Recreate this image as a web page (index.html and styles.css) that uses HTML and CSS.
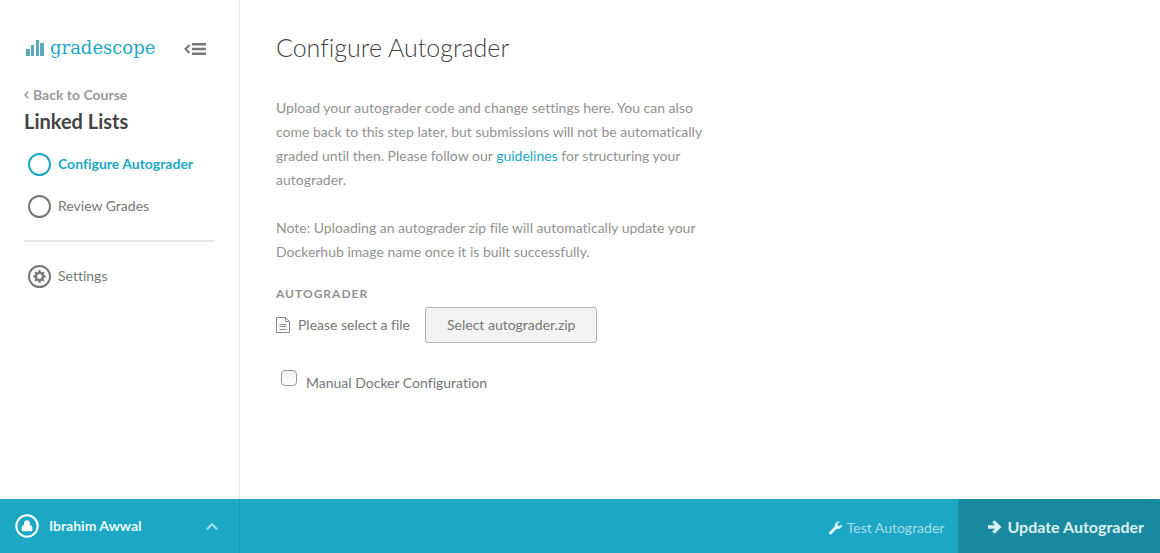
FILE: index.html
```html
<!DOCTYPE html>
<html lang="en">
<head>
<meta charset="utf-8">
<title>Configure Autograder | Gradescope</title>
<meta name="viewport" content="width=device-width, initial-scale=1">
<link rel="stylesheet" href="styles.css">
</head>
<body>
<div class="layout">
  <aside class="sidebar">
    <div class="sidebar-top">
      <a class="logo" href="#">
        <svg class="logo-mark" viewBox="0 0 18 16" width="18" height="16" aria-hidden="true"><path d="M0 9h4v7H0zM5 5h3v11H5zM10 0h3v16h-3zM14 3h4v13h-4z"/></svg>
        <span>gradescope</span>
      </a>
      <button class="collapse" type="button" aria-label="Collapse sidebar">
        <svg viewBox="0 0 22 12" width="22" height="12" aria-hidden="true"><path class="chev" d="M5.500 2 1.500 6l4 4"/><path class="bars" d="M8 0h14v2.500H8zM8 4.750h14v2.500H8zM8 9.500h14V12H8z"/></svg>
      </button>
    </div>
    <a class="back" href="#"><svg viewBox="0 0 5 8" width="5" height="8" aria-hidden="true"><path d="M4.300.7 1 4l3.300 3.300"/></svg>Back to Course</a>
    <h2 class="assignment">Linked Lists</h2>
    <nav class="steps">
      <a class="step active" href="#"><span class="ring"></span>Configure Autograder</a>
      <a class="step" href="#"><span class="ring"></span>Review Grades</a>
    </nav>
    <hr class="rule">
    <a class="step" href="#"><span class="ring"><svg viewBox="0 0 12 12" width="13" height="13" aria-hidden="true"><path fill-rule="evenodd" d="M5 .3h2l.3 1.500.9.400 1.300-.8L10.700 2.600l-.9 1.200.4.900 1.500.3v2l-1.500.3-.4.900.9 1.200-1.300 1.300-1.200-.9-.9.400-.3 1.500H5l-.3-1.500-.9-.4-1.200.9L1.300 9.400l.9-1.200-.4-.9L.3 7V5l1.500-.3.4-.9-.9-1.200L2.600 1.300l1.200.9.900-.4zM6 3.800a2.200 2.200 0 1 0 0 4.400 2.200 2.200 0 0 0 0-4.400z"/></svg></span>Settings</a>
  </aside>
  <main class="content">
    <h1 class="title">Configure Autograder</h1>
    <div class="intro">
      <p>Upload your autograder code and change settings here. You can also<br>come back to this step later, but submissions will not be automatically<br>graded until then. Please follow our <a href="#">guidelines</a> for structuring your<br>autograder.</p>
      <p>Note: Uploading an autograder zip file will automatically update your<br>Dockerhub image name once it is built successfully.</p>
    </div>
    <form class="form">
      <h3 class="label" id="zip-label">Autograder</h3>
      <div class="file-row">
        <svg viewBox="0 0 14 16" width="14" height="16" aria-hidden="true"><path d="M.5.5h9l4 4v11H.5zM9.500.5v4h4M3.500 7.500h7M3.500 9.500h7M3.500 12.500h7"/></svg>
        <span class="file-name">Please select a file</span>
        <button class="select" type="button" aria-describedby="zip-label">Select autograder.zip</button>
      </div>
      <div class="check-row">
        <input type="checkbox" id="manual"><label for="manual">Manual Docker Configuration</label>
      </div>
    </form>
  </main>
</div>
<footer class="bar">
  <button class="account" type="button">
    <svg class="avatar" viewBox="0 0 24 24" width="24" height="24" aria-hidden="true"><circle cx="12" cy="12" r="10.700"/><path d="M12 6.200a3 3 0 0 1 2.400 4.900c2 .1 3.100 1.400 3.100 4.300 0 1.300-.6 1.900-1.600 1.900H8.100c-1 0-1.600-.6-1.600-1.900 0-2.900 1.100-4.200 3.100-4.300A3 3 0 0 1 12 6.200z"/></svg>
    <span>Ibrahim Awwal</span>
    <svg class="caret" viewBox="0 0 12 7" width="12" height="7" aria-hidden="true"><path d="M1 6.200 6 1.200l5 5"/></svg>
  </button>
  <div class="actions">
    <button class="test" type="button"><svg viewBox="0 0 14 14" width="14" height="14" aria-hidden="true"><path d="M13 3.200a4 4 0 0 1-5.200 4.500l-5.200 5.200A1.500 1.500 0 0 1 .4 10.700l5.500-5.200A4 4 0 0 1 11 .8L8.600 2.300v1.900l1.700 1z"/></svg>Test Autograder</button>
    <button class="update" type="button"><svg viewBox="0 0 14 14" width="14" height="14" aria-hidden="true"><path d="M0 5.300h7L4.300 2.600 6.500.2 13.500 7l-7 6.800-2.200-2.400L7 8.700H0z"/></svg>Update Autograder</button>
  </div>
</footer>
</body>
</html>
```
FILE: styles.css
```css
* { box-sizing: border-box; }

body {
  margin: 0;
  min-height: 100vh;
  display: flex;
  flex-direction: column;
  background: #fff;
  color: #777;
  font: 14px/24px Lato, "Open Sans", sans-serif;
  font-variant-ligatures: none;
}

h1, h2, h3, p { margin: 0; }
a { color: #1ca8c5; text-decoration: none; }
button { margin: 0; padding: 0; border: 0; background: none; color: inherit; font: inherit; font-variant-ligatures: none; cursor: pointer; }
svg { flex: none; }

.layout { flex: 1; display: flex; }

.sidebar {
  flex: none;
  width: 240px;
  padding: 36px 24px 24px;
  border-right: 1px solid #e6e6e6;
}
.sidebar-top { display: flex; align-items: center; justify-content: space-between; padding: 0 9px 0 2px; height: 24px; }
.logo { display: flex; align-items: center; gap: 6px; font: 18px/24px "DejaVu Serif", serif; }
.logo-mark { fill: #5fa5be; }
.collapse { display: flex; padding-top: 2px; }
.collapse .bars { fill: #777; }
.collapse .chev { fill: none; stroke: #777; stroke-width: 2; }
.back { display: flex; align-items: center; gap: 4px; margin-top: 23px; color: #999; font-weight: 700; }
.back path { fill: none; stroke: #999; stroke-width: 1.500; }
.assignment { margin-top: 2px; color: #444; font-size: 20px; line-height: 24px; }
.steps { display: grid; gap: 18px; margin-top: 19px; }
.step { display: flex; align-items: center; gap: 7px; padding-left: 4px; color: #777; }
.step.active { color: #1ca8c5; font-weight: 700; }
.ring { display: grid; place-items: center; width: 23px; height: 23px; border: 2px solid currentColor; border-radius: 50%; }
.ring svg { fill: currentColor; }
.rule { height: 2px; margin: 22px 0; border: 0; background: #e6e6e6; }

.content { flex: 1; min-width: 0; padding: 32px 36px; }
.title { color: #444; font-size: 25px; line-height: 30px; font-weight: 300; }
.intro { display: grid; gap: 24px; margin-top: 34px; color: #929292; }
.label { margin-top: 18px; color: #929292; font-size: 12px; letter-spacing: 1px; text-transform: uppercase; }
.file-row { display: flex; align-items: center; margin-top: 1px; }
.file-row svg { fill: none; stroke: #8c8c8c; }
.file-name { margin: 0 15px 0 8px; }
.select { height: 36px; padding: 0 21px; border: 1px solid #b2b2b2; border-radius: 3px; background: #f3f3f3; }
.check-row { display: flex; margin-top: 27px; padding-left: 5px; }
.check-row input {
  appearance: none;
  width: 16px;
  height: 16px;
  margin: 0 9px 0 0;
  border: 1px solid #999;
  border-radius: 4px;
  background: linear-gradient(#f2f2f2, #fff);
}
.check-row input:checked { background: #1ca8c5; }
.check-row label { padding-top: 1px; }

.bar { display: flex; justify-content: space-between; height: 54px; background: #1ca8c5; color: #fff; }
.account { display: flex; align-items: center; width: 240px; padding: 0 21px 0 15px; border-right: 1px solid #1a9cb7; font-weight: 700; color: #e8f6f9; }
.avatar { margin-right: 10px; fill: #fff; }
.avatar circle { fill: none; stroke: #fff; stroke-width: 2; }
.caret { margin-left: auto; }
.caret path { fill: none; stroke: #a4dce8; stroke-width: 2; }
.actions { display: flex; }
.test { display: flex; align-items: center; gap: 4px; padding: 4px 14px 0; color: #a4dce8; }
.test svg { fill: #e0f3f7; }
.update { display: flex; align-items: center; gap: 5px; padding: 2px 16px 0 30px; border-radius: 3px 3px 0 0; background: #19899f; color: #dceff3; font-size: 16px; font-weight: 700; }
.update svg { fill: currentColor; }
```
